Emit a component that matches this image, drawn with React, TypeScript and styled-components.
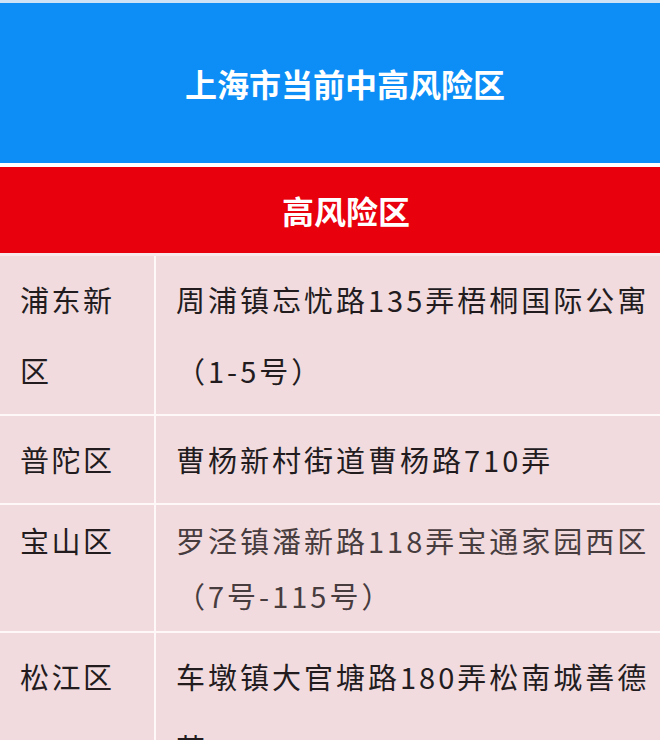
import React from "react";
import styled, { createGlobalStyle } from "styled-components";

const GlobalStyle = createGlobalStyle`
  html, body {
    margin: 0;
    padding: 0;
    background: #ffffff;
    height: 740px;
    overflow: hidden;
  }
  body {
    font-family: "Noto Sans CJK SC", "Noto Sans", sans-serif;
  }
`;

const Page = styled.div`
  width: 660px;
  display: flex;
  flex-direction: column;
`;

const TitleBar = styled.div`
  height: 160px;
  border-top: 3px solid #cfe3f7;
  background: #0c8ef6;
  color: #ffffff;
  display: flex;
  align-items: center;
  justify-content: center;
  padding-left: 30px;
  font-size: 32px;
  font-weight: 700;
`;

const SectionBar = styled.div`
  margin-top: 4px;
  height: 86px;
  background: #e8000d;
  color: #ffffff;
  display: flex;
  align-items: center;
  justify-content: center;
  padding-left: 32px;
  font-size: 32px;
  font-weight: 700;
`;

const Table = styled.div`
  display: grid;
  grid-template-columns: 154px 1fr;
  gap: 2px;
  background: #fff8f8;
  border-top: 3px solid #f8eaec;
`;

const Cell = styled.div<{ $lh: number; $muted?: boolean; $left?: boolean }>`
  background: #f2dbde;
  padding: ${(p) => (p.$left ? "8px 20px 8px 20px" : "8px 12px 8px 20px")};
  font-family: "Noto Sans CJK SC", sans-serif;
  font-size: 29px;
  line-height: ${(p) => p.$lh}px;
  letter-spacing: ${(p) => (p.$left ? "2.5px" : "3px")};
  color: ${(p) => (p.$muted ? "#473c3e" : "#231c1e")};
`;

const Line = styled.span<{ $justify?: boolean }>`
  display: block;
  white-space: nowrap;
  text-align: ${(p) => (p.$justify ? "justify" : "left")};
  text-align-last: ${(p) => (p.$justify ? "justify" : "auto")};
  text-justify: inter-character;
`;

const rows = [
  {
    district: ["浦东新", "区"],
    address: ["周浦镇忘忧路135弄梧桐国际公寓", "（1-5号）"],
    lh: 71,
  },
  {
    district: ["普陀区"],
    address: ["曹杨新村街道曹杨路710弄"],
    lh: 71,
  },
  {
    district: ["宝山区"],
    address: ["罗泾镇潘新路118弄宝通家园西区", "（7号-115号）"],
    lh: 55,
    muted: true,
  },
  {
    district: ["松江区"],
    address: ["车墩镇大官塘路180弄松南城善德", "苑"],
    lh: 71,
  },
];

const App: React.FC = () => {
  return (
    <Page lang="zh-CN">
      <GlobalStyle />
      <TitleBar>上海市当前中高风险区</TitleBar>
      <SectionBar>高风险区</SectionBar>
      <Table>
        {rows.map((r, i) => (
          <React.Fragment key={i}>
            <Cell $lh={r.lh} $left>
              {r.district.map((d, j) => (
                <Line key={j}>{d}</Line>
              ))}
            </Cell>
            <Cell $lh={r.lh} $muted={r.muted}>
              {r.address.map((a, j) => (
                <Line key={j} $justify={j < r.address.length - 1}>
                  {a}
                </Line>
              ))}
            </Cell>
          </React.Fragment>
        ))}
      </Table>
    </Page>
  );
};

export default App;
